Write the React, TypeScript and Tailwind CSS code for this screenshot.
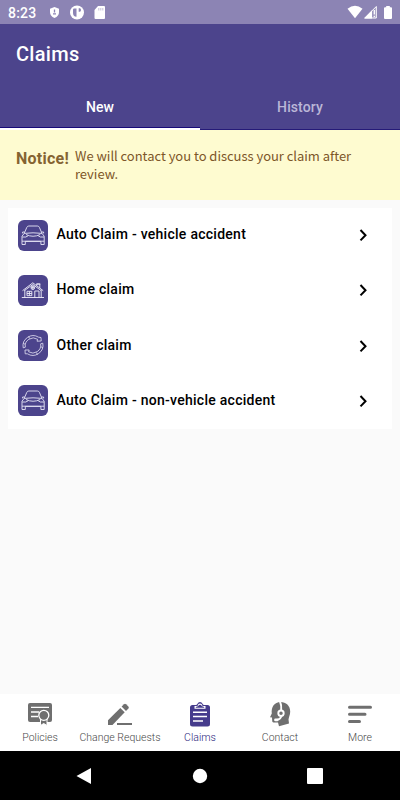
import type { ReactNode } from 'react'
import clsx from 'clsx'

const CarIcon = () => (
  <svg width="30" height="31" viewBox="0 0 30 31" fill="none" stroke="#e8e6f6" strokeWidth="0.9" strokeLinejoin="round">
    <path d="M6.2 13.4 8.8 7.4Q9.4 6 10.8 6H19.4Q20.8 6 21.4 7.4L24 13.4" />
    <path d="M6.2 13.4 4 16.2V24.5H7.3V21.4H22.9V24.5H26.2V16.2L24 13.4" />
    <path d="M4 21.2H26.2M6.2 13.4Q15 12.2 24 13.4" />
    <path d="M4.2 17Q8.5 17.6 10 15.8M26 17Q21.7 17.6 20.2 15.8M8 14.5Q15 18 22.2 14.5" />
    <path d="M6.6 12H4.6V13.4M23.6 12H25.6V13.4" />
  </svg>
)

const HouseIcon = () => (
  <svg width="30" height="31" viewBox="0 0 30 31" fill="none" stroke="#f0effa" strokeWidth="0.9">
    <path d="M4.5 15.7 14.8 7.8 25.2 15.7M6.5 15.5 14.8 9.5 23 15.5" />
    <path d="M18.8 10.5V9H21.8V13M18.2 9H22.4" />
    <path d="M6.8 15V22.5M23.2 15V22.5M3.8 22.5H26" />
    <path d="M9 16.3H13.8V20.7H9ZM11.4 16.3V20.7M9 18.5H13.8" />
    <path d="M16.8 22.5V16H21V22.5" />
    <circle cx="14.8" cy="12.7" r="1.8" />
    <path d="M14.8 11V14.5M13 12.7H16.6" />
  </svg>
)

const CycleIcon = () => (
  <svg width="30" height="31" viewBox="0 0 30 31" fill="none" stroke="#e4e2f4" strokeWidth="0.8" strokeLinejoin="round">
    <path d="M5.2 17.8A10.2 10.2 0 0 1 20.6 7.2L23 7.5 23.2 11 19 11.2 19.6 9.3A8 8 0 0 0 7.3 17.2Z" />
    <path d="M24.8 13.2A10.2 10.2 0 0 1 9.4 23.8L7.2 23.8 7 20 11.2 20 10.6 21.8A8 8 0 0 0 22.7 13.8Z" />
    <path d="M10.5 6.5 11.7 8.5M5.2 13.5 7.2 14.2M19.5 24.5 18.3 22.5M24.8 17.5 22.8 16.8" />
  </svg>
)

const PoliciesIcon = () => (
  <svg width="28" height="26" viewBox="0 0 28 26">
    <rect x="2" y="2" width="24" height="19" rx="2" fill="#6f6f6f" />
    <path d="M5 6.3H23M5 11H13M5 15.5H12" stroke="#fff" strokeWidth="1.3" />
    <path d="M14.5 17V24.5L17.7 22.5 21 24.5V17Z" fill="#6f6f6f" stroke="#fff" strokeWidth="1" />
    <circle cx="17.8" cy="14.3" r="5" fill="#6f6f6f" stroke="#fff" strokeWidth="1.3" />
  </svg>
)

const RequestsIcon = () => (
  <svg width="28" height="26" viewBox="0 0 28 26" fill="#6f6f6f">
    <path d="M2 24V19.2L14.3 6.9 18.7 11.3 6.5 24Z" />
    <path d="M15.6 5.6 18 3.2Q19 2.3 20 3.2L22.4 5.6Q23.3 6.6 22.4 7.6L20 10Z" />
    <rect x="11" y="22" width="15" height="2" />
  </svg>
)

const ClaimsIcon = () => (
  <svg width="28" height="26" viewBox="0 0 28 26">
    <path d="M6.5 4H9.8Q11 4 11.5 2.8 12.2 1 14 1T16.5 2.8Q17 4 18.2 4H21.5Q24 4 24 6.5V23Q24 25.5 21.5 25.5H6.5Q4 25.5 4 23V6.5Q4 4 6.5 4Z" fill="#453b8c" />
    <path d="M8.5 7.8V5H11.5Q12 2.6 14 2.6T16.5 5H19.5V7.8Z" fill="#fff" />
    <path d="M9.5 6.7Q9.8 5.4 12 5.3 12.5 3.8 14 3.8T16 5.3Q18.2 5.4 18.5 6.7Z" fill="#453b8c" />
    <path d="M7 11.2H21M7 15.6H21M7 20H17" stroke="#fff" strokeWidth="1.5" />
  </svg>
)

const ContactIcon = () => (
  <svg width="28" height="26" viewBox="0 0 28 26">
    <path d="M14.5 1C20 1 24.2 4.8 24.2 10.5 24.2 14.2 22.8 15.8 22.5 18.5L23 22.5 13 25.2 12 21.5H7.5Q6 21.5 6.2 19.5L6 16.5 4 16.2 5.8 12.5C5 6 8.5 1 14.5 1Z" fill="#6f6f6f" />
    <g fill="none" stroke="#fff">
      <path d="M14 .5Q15.6 4 15.2 9" strokeWidth="1.9" />
      <circle cx="15" cy="12.2" r="2.7" strokeWidth="1.9" />
      <path d="M15.5 14.5Q14.8 18.2 10.8 18.9" strokeWidth="1.7" />
      <path d="M9.4 18.9H11.2" strokeWidth="2.6" strokeLinecap="round" />
    </g>
  </svg>
)

const MoreIcon = () => (
  <svg width="28" height="26" viewBox="0 0 28 26" stroke="#6f6f6f" strokeWidth="3" strokeLinecap="round">
    <path d="M3.5 6.3H24.5M3.5 13.3H19M3.5 20.5H13.5" />
  </svg>
)

const claims: { title: string; icon: ReactNode }[] = [
  { title: 'Auto Claim - vehicle accident', icon: <CarIcon /> },
  { title: 'Home claim', icon: <HouseIcon /> },
  { title: 'Other claim', icon: <CycleIcon /> },
  { title: 'Auto Claim - non-vehicle accident', icon: <CarIcon /> },
]

const menu: { label: string; icon: ReactNode; active?: boolean }[] = [
  { label: 'Policies', icon: <PoliciesIcon /> },
  { label: 'Change Requests', icon: <RequestsIcon /> },
  { label: 'Claims', icon: <ClaimsIcon />, active: true },
  { label: 'Contact', icon: <ContactIcon /> },
  { label: 'More', icon: <MoreIcon /> },
]

const StatusBar = () => (
  <div className="flex h-6 shrink-0 items-center bg-[#8c84b4] text-white">
    <span className="ml-2 w-[41px] pt-px text-[14px] leading-6 font-medium tracking-[0.2px]">8:23</span>
    <svg width="60" height="24" viewBox="49 0 60 24" fill="#fff">
      <path d="M54.5 7 59 8.7V12Q59 16 54.5 18 50 16 50 12V8.7Z" />
      <path d="M54.5 9.5V12.5M53 13.8H56" stroke="#8c84b4" strokeWidth="1.3" />
      <circle cx="77" cy="12.5" r="7" />
      <path d="M73 9.8Q73 8.5 74.3 8.5H76.5V16.8Q73 16.5 73 13ZM78.7 8.2H79.8Q81 8.2 81 10T79.8 11.8H78.7Z" fill="#8c84b4" />
      <path d="M98 6H104Q105 6 105 7V18Q105 19 104 19H95.5Q94.5 19 94.5 18V10Z" />
      <path d="M98.8 8V10.5M100.8 8V10.5M102.8 8V10.5" stroke="#8c84b4" strokeWidth=".5" />
    </svg>
    <svg className="ml-auto" width="56" height="24" viewBox="344 0 56 24" fill="#fff">
      <path d="M347.5 8.8Q355 2.5 362.5 8.8L355 18.2Z" />
      <path d="M364.8 18 376.3 6.5V18Z" fillOpacity=".15" stroke="#fff" strokeWidth="1" />
      <path d="M364 18.5 372 10.3V18.5Z" />
      <path d="M374.3 10V14.5M374.3 15.8V17" stroke="#fff" strokeWidth="1.3" />
      <path d="M386.2 6H389.8V7.2H391Q392 7.2 392 8.2V18Q392 19 391 19H385Q384 19 384 18V8.2Q384 7.2 385 7.2H386.2Z" />
    </svg>
  </div>
)

export default function App() {
  return (
    <div className="flex h-[800px] w-[400px] flex-col overflow-hidden bg-[#fafafa] font-[Roboto,sans-serif]">
      <StatusBar />
      <header className="h-[106px] shrink-0 bg-[#4c448c] text-white">
        <h1 className="h-[59px] pl-4 text-[20px] leading-[61px] font-medium tracking-[0.3px]">Claims</h1>
        <div className="flex h-[47px] text-center text-[14px] leading-[48px] font-medium tracking-[0.1px]">
          <div className="w-1/2 border-b-2 border-white shadow-[inset_0_-1px_0_#160a78]">New</div>
          <div className="w-1/2 border-b border-[#251a78] text-[#bbb7d7]">History</div>
        </div>
      </header>
      <div className="flex h-[69.5px] shrink-0 bg-[#fefbd0] pt-[17px] pl-4">
        <strong className="w-[59px] text-[16px] leading-[23px] font-bold tracking-[0.25px] text-[#856331]">Notice!</strong>
        <p className="w-[290px] font-['Noto_Sans_CJK_SC',sans-serif] text-[13px] leading-[18px] tracking-[-0.03px] text-[#7d5628]">
          We will contact you to discuss your claim after review.
        </p>
      </div>
      <main className="flex-1 px-2 pt-[8.5px]">
        <ul className="bg-white">
          {claims.map(({ title, icon }) => (
            <li key={title} className="flex h-[55.25px] items-center pb-px pl-[10px]">
              <span className="h-[31px] w-[30px] shrink-0 overflow-hidden rounded-md bg-[#4c448c]">{icon}</span>
              <span className="ml-[8.5px] pb-px text-[14px] font-medium tracking-[0.27px] text-black">{title}</span>
              <svg className="mr-[22px] ml-auto" width="14" height="14" viewBox="0 0 14 14" fill="none" stroke="#000" strokeWidth="2">
                <path d="M4.5 2 9.5 7.2 4.5 12.4" />
              </svg>
            </li>
          ))}
        </ul>
      </main>
      <nav className="flex h-[57px] shrink-0 bg-white">
        {menu.map(({ label, icon, active }) => (
          <button
            key={label}
            type="button"
            className={clsx(
              'flex w-1/5 flex-col items-center pt-[7px] text-[10.5px] leading-[21px] font-light whitespace-nowrap',
              active ? 'text-[#281c7c]' : 'text-[#484848]',
            )}
          >
            {icon}
            <span>{label}</span>
          </button>
        ))}
      </nav>
      <div className="h-[49px] shrink-0 bg-black">
        <svg width="400" height="49" viewBox="0 751 400 49" fill="#fff">
          <path d="M91 768V784L76.5 776Z" />
          <circle cx="200" cy="776" r="7.2" />
          <rect x="307" y="768" width="16" height="16" rx="1" />
        </svg>
      </div>
    </div>
  )
}
